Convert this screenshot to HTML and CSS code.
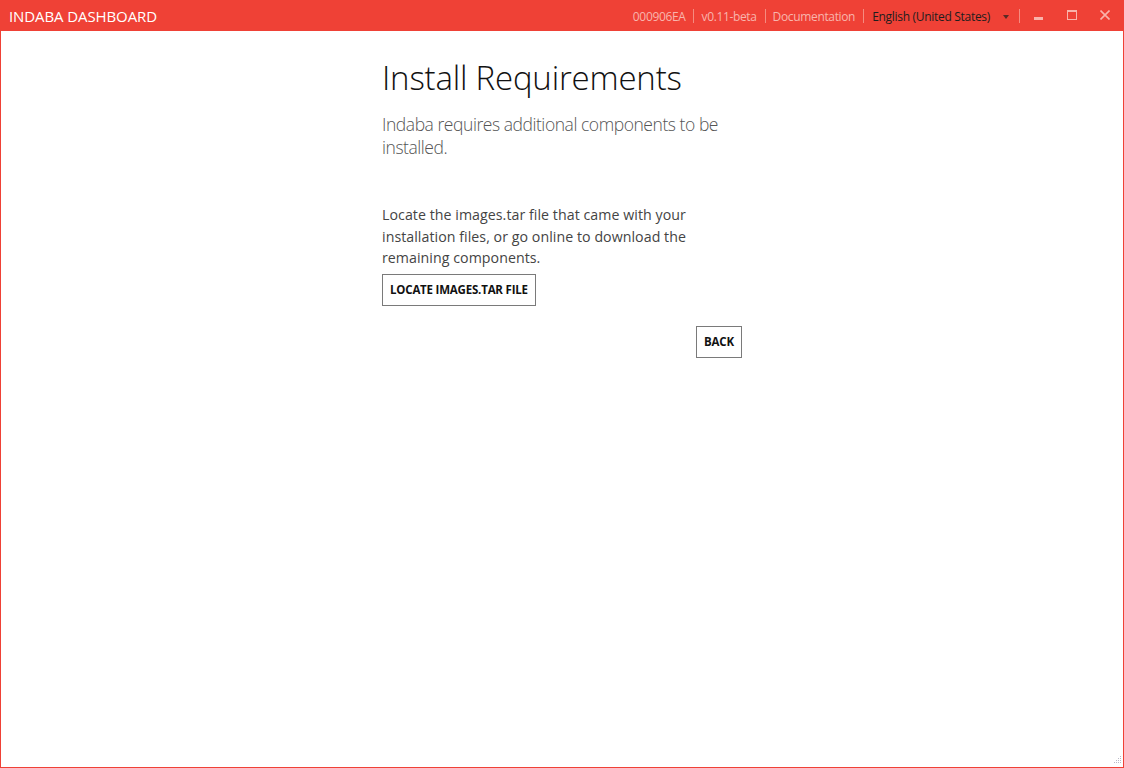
FILE: index.html
```html
<!DOCTYPE html>
<html>
<head>
<meta charset="utf-8">
<link rel="stylesheet" href="styles.css">
</head>
<body>
<div class="window">
  <header class="titlebar">
    <div class="app-title">INDABA DASHBOARD</div>
    <div class="tb-right">
      <span class="tb-item">000906EA</span>
      <span class="tb-sep"></span>
      <span class="tb-item">v0.11-beta</span>
      <span class="tb-sep"></span>
      <span class="tb-item">Documentation</span>
      <span class="tb-sep"></span>
      <span class="lang">English (United States)<span class="caret"></span></span>
      <span class="tb-sep"></span>
      <span class="win-btn win-min">
        <svg width="10" height="10" viewBox="0 0 10 10"><rect x="0" y="7" width="9" height="3" fill="#f9b3ab"/></svg>
      </span>
      <span class="win-btn">
        <svg width="10" height="10" viewBox="0 0 10 10"><rect x="0.5" y="0.5" width="9" height="9" fill="none" stroke="#f9b3ab"/><rect x="0" y="0" width="10" height="2" fill="#f9b3ab"/></svg>
      </span>
      <span class="win-btn win-close">
        <svg width="10" height="10" viewBox="0 0 10 10"><path d="M0.5 0.5 L9.5 9.5 M9.5 0.5 L0.5 9.5" stroke="#f9b3ab" stroke-width="1.6"/></svg>
      </span>
    </div>
  </header>
  <main class="content">
    <div class="column">
      <h1 class="title">Install Requirements</h1>
      <p class="subtitle">Indaba requires additional components to be installed.</p>
      <p class="body-text">Locate the images.tar file that came with your installation files, or go online to download the remaining components.</p>
      <button class="btn">LOCATE IMAGES.TAR FILE</button>
      <div class="actions">
        <button class="btn">BACK</button>
      </div>
    </div>
  </main>
  <div class="grip">
    <svg width="10" height="10" viewBox="0 0 10 10" fill="#b9b9c8">
      <rect x="8" y="0" width="1" height="1"/>
      <rect x="6" y="2" width="1" height="1"/><rect x="8" y="2" width="1" height="1"/>
      <rect x="4" y="4" width="1" height="1"/><rect x="6" y="4" width="1" height="1"/><rect x="8" y="4" width="1" height="1"/>
      <rect x="2" y="6" width="1" height="1"/><rect x="4" y="6" width="1" height="1"/><rect x="6" y="6" width="1" height="1"/><rect x="8" y="6" width="1" height="1"/>
    </svg>
  </div>
</div>
</body>
</html>
```
FILE: styles.css
```css
* { box-sizing: border-box; }
html, body { margin: 0; padding: 0; height: 100%; }
body {
  font-family: "Open Sans", "Noto Sans", "DejaVu Sans", sans-serif;
  background: #fff;
}
.window {
  position: relative;
  height: 768px;
  border: 1px solid #ef4136;
  border-top: none;
  display: flex;
  flex-direction: column;
}
.titlebar {
  height: 31px;
  background: #ef4136;
  margin: 0 -1px;
  display: flex;
  align-items: center;
  justify-content: space-between;
  padding-left: 9px;
}
.app-title {
  color: #fff;
  font-size: 15px;
  letter-spacing: -0.1px;
  padding-top: 1px;
}
.tb-right {
  display: flex;
  align-items: center;
  height: 100%;
  font-size: 12px;
  letter-spacing: -0.35px;
  padding-top: 2px;
  padding-right: 2px;
}
.tb-item {
  color: #f8b5ad;
  padding: 0 8px 0 7px;
}
.tb-sep {
  width: 1px;
  height: 14px;
  background: #f58b80;
  margin-bottom: 2px;
}
.lang {
  color: #1e1e1e;
  padding: 0 8px 0 8px;
  display: flex;
  align-items: center;
  letter-spacing: -0.3px;
}
.caret {
  width: 0; height: 0;
  border-left: 3px solid transparent;
  border-right: 3px solid transparent;
  border-top: 4px solid #5a2a25;
  margin-left: 13px;
  margin-right: 2px;
}
.win-btn {
  width: 33px;
  height: 100%;
  display: flex;
  align-items: center;
  justify-content: center;
  padding-bottom: 3px;
}
.win-min { margin-left: 2px; }
.win-close { width: 34px; }
.content {
  flex: 1;
  display: flex;
  justify-content: center;
}
.column {
  width: 360px;
  padding-top: 25px;
  display: flex;
  flex-direction: column;
  align-items: flex-start;
}
.title {
  font-weight: 300;
  font-size: 33px;
  color: #111;
  margin: 0;
  line-height: 44px;
  letter-spacing: -0.2px;
}
.subtitle {
  font-weight: 300;
  font-size: 17.5px;
  color: #555;
  margin: 13px 0 0;
  line-height: 23px;
  width: 350px;
  letter-spacing: -0.45px;
}
.body-text {
  font-size: 14.2px;
  color: #444;
  margin: 45px 0 0;
  line-height: 21.5px;
  width: 330px;
  letter-spacing: 0.05px;
}
.btn {
  font-family: inherit;
  font-weight: 700;
  font-size: 11.5px;
  letter-spacing: -0.2px;
  color: #111;
  background: #fff;
  border: 1px solid #7a7a7a;
  height: 32px;
  padding: 0 7px;
  margin-top: 5px;
  cursor: pointer;
}
.actions {
  align-self: stretch;
  display: flex;
  justify-content: flex-end;
  margin-top: 20px;
}
.actions .btn { margin-top: 0; padding: 0 7px; width: 46px; }
.grip {
  position: absolute;
  right: 1px;
  bottom: 1px;
  line-height: 0;
}
```
